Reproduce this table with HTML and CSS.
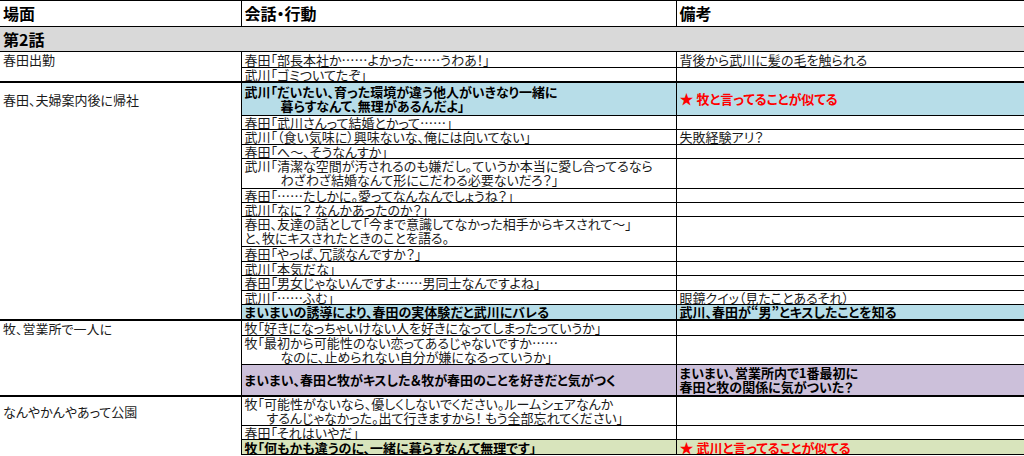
FILE: index.html
```html
<!DOCTYPE html>
<html lang="ja">
<head>
<meta charset="utf-8">
<title>第2話</title>
<link rel="stylesheet" href="styles.css">
</head>
<body>
<table class="sheet">
  <colgroup><col class="c1"><col class="c2"><col class="c3"></colgroup>
  <thead>
    <tr class="hd"><th>場面</th><th>会話・行動</th><th>備考</th></tr>
  </thead>
  <tbody>
    <tr class="ep"><td colspan="3">第2話</td></tr>

    <tr class="r16"><td class="scene">春田出勤</td><td>春田「部長本社か……よかった……うわあ！」</td><td>背後から武川に髪の毛を触られる</td></tr>
    <tr class="r14"><td class="scene"></td><td>武川「ゴミついてたぞ」</td><td></td></tr>

    <tr class="grp r33 blue"><td class="scene plain">春田、夫婦案内後に帰社</td><td class="b two">武川「だいたい、育った環境が違う他人がいきなり一緒に<br><span class="ind3">暮らすなんて、無理があるんだよ」</span></td><td class="note"><span class="star">★</span> 牧と言ってることが似てる</td></tr>
    <tr class="r14"><td class="scene"></td><td>春田「武川さんって結婚とかって……」</td><td></td></tr>
    <tr class="r15"><td class="scene"></td><td>武川「（食い気味に）興味ないな、俺には向いてない」</td><td>失敗経験アリ？</td></tr>
    <tr class="r14"><td class="scene"></td><td>春田「へ〜、そうなんすか」</td><td></td></tr>
    <tr class="r30"><td class="scene"></td><td class="two">武川「清潔な空間が汚されるのも嫌だし。ていうか本当に愛し合ってるなら<br><span class="ind3">わざわざ結婚なんて形にこだわる必要ないだろ？」</span></td><td></td></tr>
    <tr class="r14"><td class="scene"></td><td>春田「……たしかに。愛ってなんなんでしょうね？」</td><td></td></tr>
    <tr class="r14"><td class="scene"></td><td>武川「なに？ なんかあったのか？」</td><td></td></tr>
    <tr class="r30"><td class="scene"></td><td class="two">春田、友達の話として「今まで意識してなかった相手からキスされて〜」<br>と、牧にキスされたときのことを語る。</td><td></td></tr>
    <tr class="r15"><td class="scene"></td><td>春田「やっぱ、冗談なんですか？」</td><td></td></tr>
    <tr class="r14"><td class="scene"></td><td>武川「本気だな」</td><td></td></tr>
    <tr class="r15"><td class="scene"></td><td>春田「男女じゃないんですよ……男同士なんですよね」</td><td></td></tr>
    <tr class="r14"><td class="scene"></td><td>武川「……ふむ」</td><td>眼鏡クイッ（見たことあるそれ）</td></tr>
    <tr class="r16 blue"><td class="scene plain"></td><td class="b">まいまいの誘導により、春田の実体験だと武川にバレる</td><td class="b">武川、春田が“男”とキスしたことを知る</td></tr>

    <tr class="grp r15"><td class="scene">牧、営業所で一人に</td><td>牧「好きになっちゃいけない人を好きになってしまったっていうか」</td><td></td></tr>
    <tr class="r29"><td class="scene"></td><td class="two">牧「最初から可能性のない恋ってあるじゃないですか……<br><span class="ind3">なのに、止められない自分が嫌になるっていうか」</span></td><td></td></tr>
    <tr class="r32 purple"><td class="scene plain"></td><td class="b">まいまい、春田と牧がキスした＆牧が春田のことを好きだと気がつく</td><td class="b two">まいまい、営業所内で1番最初に<br>春田と牧の関係に気がついた？</td></tr>

    <tr class="grp r29"><td class="scene">なんやかんやあって公園</td><td class="two">牧「可能性がないなら、優しくしないでください。ルームシェアなんか<br><span class="ind2">するんじゃなかった。出て行きますから！ もう全部忘れてください」</span></td><td></td></tr>
    <tr class="r14"><td class="scene"></td><td>春田「それはいやだ」</td><td></td></tr>
    <tr class="r15 green"><td class="scene plain"></td><td class="b">牧「何もかも違うのに、一緒に暮らすなんて無理です」</td><td class="note"><span class="star">★</span> 武川と言ってることが似てる</td></tr>
  </tbody>
</table>
</body>
</html>
```

FILE: styles.css
```css
html, body {
  margin: 0;
  padding: 0;
  background: #ffffff;
}

body {
  font-family: "Noto Sans CJK JP", "Noto Sans", sans-serif;
  font-size: 13px;
  font-feature-settings: "palt";
  color: #1a1a1a;
  width: 1024px;
  height: 456px;
  overflow: hidden;
}

.sheet {
  width: 1024px;
  table-layout: fixed;
  border-collapse: collapse;
  border-spacing: 0;
}

.c1 { width: 241px; }
.c2 { width: 435px; }
.c3 { width: 348px; }

.sheet th,
.sheet td {
  padding: 0 0 0 3px;
  line-height: 13px;
  white-space: nowrap;
  overflow: hidden;
  text-align: left;
  vertical-align: middle;
  border: 1px solid #000;
}

.sheet td.two {
  line-height: 14px;
}

.sheet th:first-child,
.sheet td:first-child {
  border-left: none;
}

.hd th {
  height: 25px;
  font-size: 16px;
  font-weight: bold;
  color: #000;
  border-top: 1px solid #000;
}

.ep td {
  height: 24px;
  font-size: 16px;
  font-weight: bold;
  color: #000;
  background: #d9d9d9;
}

.sheet td.scene {
  border-top: none;
  border-bottom: none;
  background: #ffffff;
}

.sheet tr.grp td {
  border-top: 2px solid #000;
}

.r14 { height: 14px; }
.r15 { height: 15px; }
.r16 { height: 16px; }
.r29 { height: 29px; }
.r30 { height: 30px; }
.r32 { height: 32px; }
.r33 { height: 33px; }

.blue td { background: #b7dde8; }
.purple td { background: #ccc0da; }
.green td { background: #d8e4bc; }

.b {
  font-weight: bold;
  color: #000;
}

.note {
  font-weight: bold;
  color: #ff0000;
}

.star {
  font-size: 14px;
}

.ind3 { padding-left: 36px; }
.ind2 { padding-left: 22px; }
```
